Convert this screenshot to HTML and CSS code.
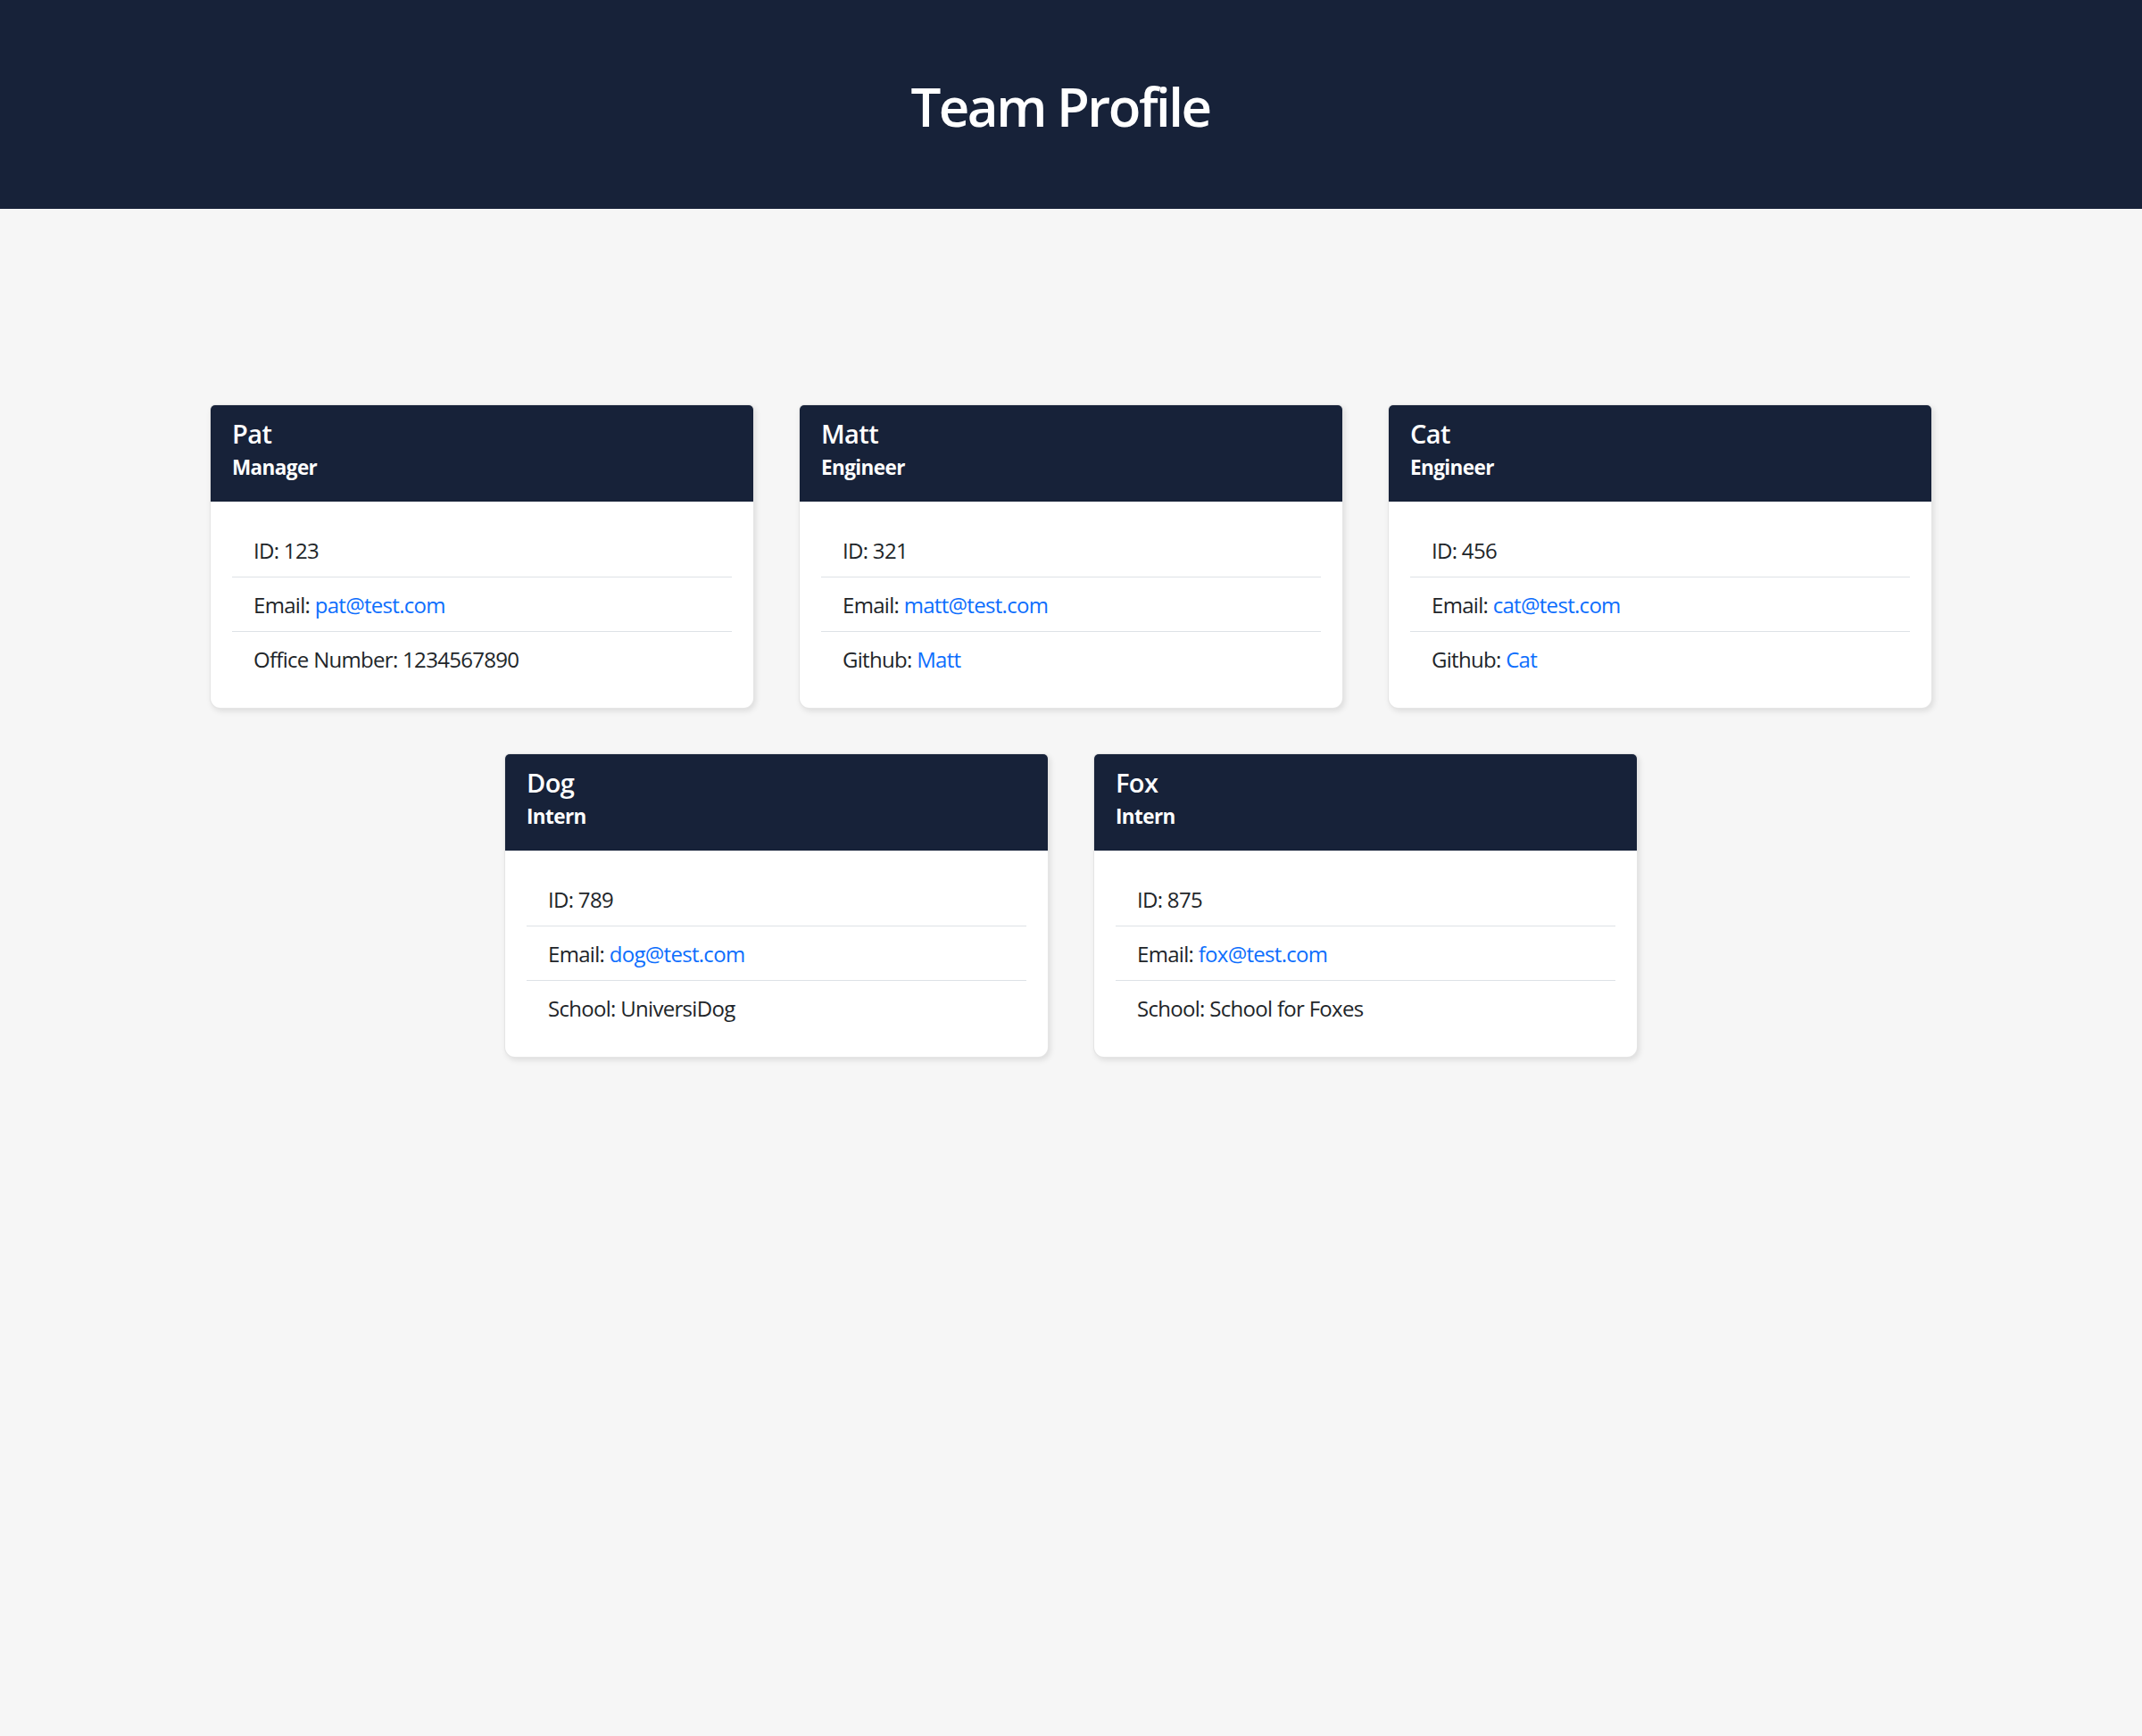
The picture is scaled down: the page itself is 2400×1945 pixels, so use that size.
FILE: index.html
```html
<!DOCTYPE html>
<html lang="en">
<head>
<meta charset="utf-8">
<title>Team Profile</title>
<link rel="stylesheet" href="styles.css">
</head>
<body>
<header class="hero">
  <h1 class="hero-title">Team Profile</h1>
</header>
<main class="team">
  <div class="card">
    <div class="card-header">
      <h2 class="card-name">Pat</h2>
      <h3 class="card-role">Manager</h3>
    </div>
    <div class="card-body">
      <ul class="info-list">
        <li class="info-item">ID: 123</li>
        <li class="info-item">Email: <a class="link" href="mailto:pat@test.com">pat@test.com</a></li>
        <li class="info-item">Office Number: 1234567890</li>
      </ul>
    </div>
  </div>
  <div class="card">
    <div class="card-header">
      <h2 class="card-name">Matt</h2>
      <h3 class="card-role">Engineer</h3>
    </div>
    <div class="card-body">
      <ul class="info-list">
        <li class="info-item">ID: 321</li>
        <li class="info-item">Email: <a class="link" href="mailto:matt@test.com">matt@test.com</a></li>
        <li class="info-item">Github: <a class="link" href="#">Matt</a></li>
      </ul>
    </div>
  </div>
  <div class="card">
    <div class="card-header">
      <h2 class="card-name">Cat</h2>
      <h3 class="card-role">Engineer</h3>
    </div>
    <div class="card-body">
      <ul class="info-list">
        <li class="info-item">ID: 456</li>
        <li class="info-item">Email: <a class="link" href="mailto:cat@test.com">cat@test.com</a></li>
        <li class="info-item">Github: <a class="link" href="#">Cat</a></li>
      </ul>
    </div>
  </div>
  <div class="card">
    <div class="card-header">
      <h2 class="card-name">Dog</h2>
      <h3 class="card-role">Intern</h3>
    </div>
    <div class="card-body">
      <ul class="info-list">
        <li class="info-item">ID: 789</li>
        <li class="info-item">Email: <a class="link" href="mailto:dog@test.com">dog@test.com</a></li>
        <li class="info-item">School: UniversiDog</li>
      </ul>
    </div>
  </div>
  <div class="card">
    <div class="card-header">
      <h2 class="card-name">Fox</h2>
      <h3 class="card-role">Intern</h3>
    </div>
    <div class="card-body">
      <ul class="info-list">
        <li class="info-item">ID: 875</li>
        <li class="info-item">Email: <a class="link" href="mailto:fox@test.com">fox@test.com</a></li>
        <li class="info-item">School: School for Foxes</li>
      </ul>
    </div>
  </div>
</main>
</body>
</html>
```
FILE: styles.css
```css
* {
  box-sizing: border-box;
}

html, body {
  margin: 0;
  padding: 0;
}

body {
  min-height: 1945px;
  background: #f6f6f6;
  color: #212529;
  font-family: "Open Sans", "Noto Sans", "Liberation Sans", sans-serif;
  font-size: 24px;
  line-height: 1.5;
}

.hero {
  height: 234px;
  background: #172239;
  padding: 83px 24px 0 0;
  text-align: center;
}

.hero-title {
  margin: 0;
  color: #ffffff;
  font-size: 60px;
  font-weight: 600;
  line-height: 72px;
  letter-spacing: -2.5px;
}

.team {
  width: 1980px;
  margin: 194px auto 0;
  display: flex;
  flex-wrap: wrap;
  justify-content: center;
}

.card {
  width: 610px;
  margin: 25px;
  background: #ffffff;
  border: 1px solid rgba(0, 0, 0, 0.1);
  border-radius: 6px 6px 12px 12px;
  box-shadow: 2px 3px 6px rgba(0, 0, 0, 0.1);
  overflow: hidden;
}

.card-header {
  background: #172239;
  color: #ffffff;
  padding: 14px 24px 24px;
}

.card-name {
  margin: 0;
  font-size: 29px;
  font-weight: 600;
  line-height: 36px;
  letter-spacing: -0.6px;
}

.card-role {
  margin: 6px 0 0;
  font-size: 22.5px;
  font-weight: 700;
  line-height: 28px;
  letter-spacing: -0.6px;
}

.card-body {
  padding: 24px 24px 25px;
}

.info-list {
  list-style: none;
  margin: 0;
  padding: 0;
}

.info-item {
  padding: 13px 24px 11px;
  line-height: 36px;
  letter-spacing: -0.7px;
  border-bottom: 1px solid #dee2e6;
}

.info-item:last-child {
  border-bottom: none;
}

.link {
  color: #0d6efd;
  text-decoration: none;
}
```
